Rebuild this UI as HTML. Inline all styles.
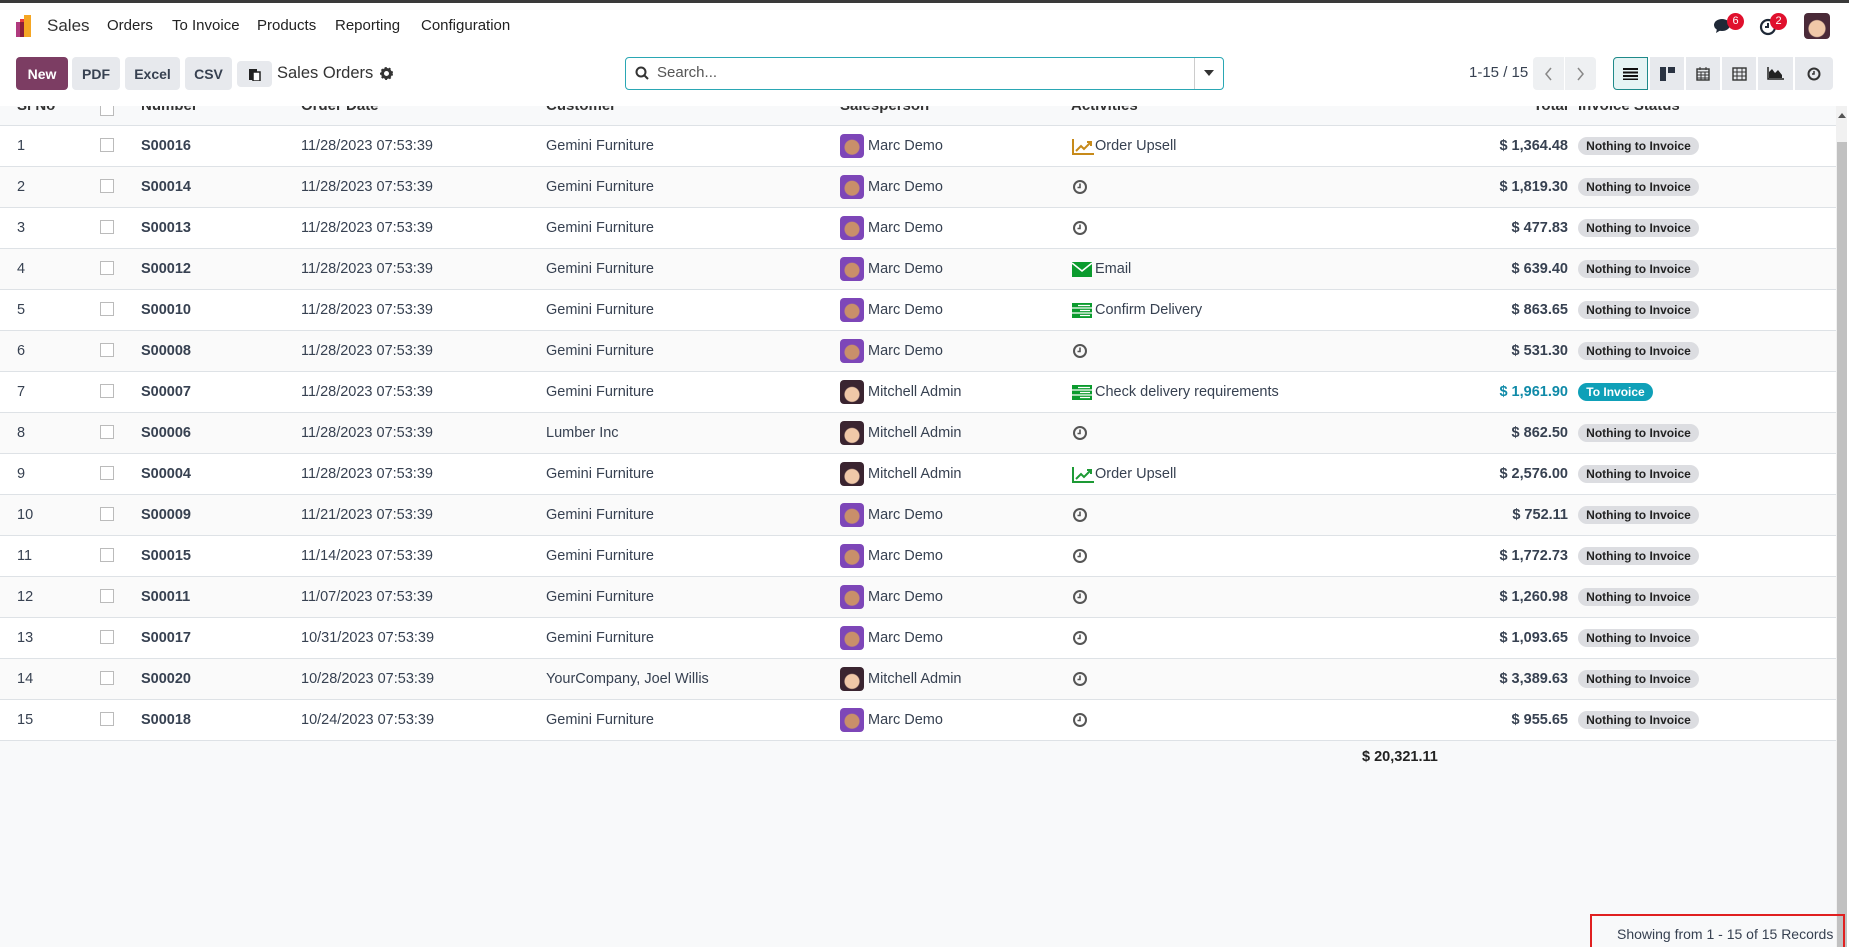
<!DOCTYPE html>
<html><head><meta charset="utf-8"><style>
*{box-sizing:border-box;margin:0;padding:0}
body{width:1849px;height:947px;overflow:hidden;background:#f8f9fa;font-family:"Liberation Sans",sans-serif;color:#374151;font-size:14.5px;position:relative}
.top{position:absolute;left:0;top:0;width:1849px;height:3px;background:#3a3a3a}
.nav{position:absolute;left:0;top:3px;width:1849px;height:47px;background:#fff}
.ab{position:absolute;white-space:nowrap}
.ctl{position:absolute;left:0;top:50px;width:1849px;height:56px;background:#fff}
.btn{position:absolute;top:57px;height:33px;border-radius:4px;background:#e7e9ed;font-weight:bold;font-size:14px;color:#374151;display:flex;align-items:center;justify-content:center}
.hdr{position:absolute;left:0;top:106px;width:1836px;height:20px;background:#f8f9fa;border-bottom:1px solid #dee2e6;overflow:hidden}
.hdr span{position:absolute;top:-9px;font-weight:bold;font-size:15px;color:#333;white-space:nowrap}
.row{position:absolute;left:0;width:1836px;height:41px;border-bottom:1px solid #dee2e6;background:#fff}
.row.s{background:#fafafa}
.row span,.row div{position:absolute;white-space:nowrap}
.cb{width:14px;height:14px;border:1px solid #bbb;background:#fff;top:12px;left:100px}
.t{top:12px;font-size:14.5px;color:#374151}
.b{font-weight:bold}
.av{left:840px;top:8px;width:24px;height:24px;border-radius:4px}
.m{background:radial-gradient(circle at 50% 55%,#c98f6a 0 7px,#7d46b8 8px)}
.a{background:radial-gradient(circle at 50% 60%,#f0c8a8 0 7px,#3a2430 8px)}
.bd{left:1578px;top:11px;height:18px;border-radius:9px;background:#dcdde1;font-weight:bold;font-size:12px;color:#222;line-height:18px;width:121px;text-align:center}
.ti{background:#0fa0b8;color:#fff;width:75px}
.amt{right:268px;top:12px;font-weight:bold}
.vs{position:absolute;top:57px;height:33px;background:#e7e9ed;display:flex;align-items:center;justify-content:center}
.nv{position:absolute;top:14px;font-size:15px;color:#222;white-space:nowrap}
</style></head><body>
<div class="top"></div>
<div class="nav">
 <svg class="ab" style="left:16px;top:12px" width="19" height="22"><rect x="0" y="7" width="7" height="15" fill="#b03a7e"/><rect x="4" y="4" width="7" height="18" fill="#e83c3c"/><rect x="8" y="0" width="7" height="22" fill="#f5a623"/><rect x="4" y="7" width="4" height="15" fill="#8c1f3a"/></svg>
 <span class="nv" style="left:47px;top:13px;font-size:17px;color:#333">Sales</span>
 <span class="nv" style="left:107px">Orders</span>
 <span class="nv" style="left:172px">To Invoice</span>
 <span class="nv" style="left:257px">Products</span>
 <span class="nv" style="left:335px">Reporting</span>
 <span class="nv" style="left:421px">Configuration</span>
</div>
<svg class="ab" style="left:1714px;top:18px" width="18" height="16"><ellipse cx="8" cy="7" rx="8" ry="6" fill="#1f2937"/><path d="M3 11 L2 15 L7 12Z" fill="#1f2937"/></svg>
<div class="ab" style="left:1727px;top:13px;width:17px;height:17px;border-radius:50%;background:#e0102d;color:#fff;font-size:11px;text-align:center;line-height:17px">6</div>
<svg class="ab" style="left:1759px;top:18px" width="18" height="18"><circle cx="9" cy="9" r="7" fill="none" stroke="#1f2937" stroke-width="2.2"/><path d="M9 5V9H6" fill="none" stroke="#1f2937" stroke-width="2"/></svg>
<div class="ab" style="left:1770px;top:13px;width:17px;height:17px;border-radius:50%;background:#e0102d;color:#fff;font-size:11px;text-align:center;line-height:17px">2</div>
<div class="ab" style="left:1804px;top:13px;width:26px;height:26px;border-radius:4px;background:radial-gradient(circle at 50% 60%,#f0c8a8 0 8px,#4a2a38 9px)"></div>

<div class="ctl"></div>
<div class="btn" style="left:16px;width:52px;background:#7c3d63;color:#fff">New</div>
<div class="btn" style="left:72px;width:48px">PDF</div>
<div class="btn" style="left:125px;width:55px">Excel</div>
<div class="btn" style="left:185px;width:47px">CSV</div>
<div class="btn" style="left:237px;width:35px;top:61px;height:26px"><svg width="12" height="14"><rect x="0" y="2" width="8" height="11" fill="#222"/><rect x="4" y="5" width="7" height="9" fill="#fff" stroke="#222" stroke-width="1.5"/></svg></div>
<span class="ab" style="left:277px;top:64px;font-size:16.5px;color:#333">Sales Orders</span>
<svg class="ab" style="left:380px;top:67px" width="13" height="13"><circle cx="6.5" cy="6.5" r="4" fill="none" stroke="#333" stroke-width="3"/><circle cx="6.5" cy="6.5" r="5.5" fill="none" stroke="#333" stroke-width="2" stroke-dasharray="2 2"/></svg>
<div class="ab" style="left:625px;top:57px;width:599px;height:33px;border:1px solid #2aa7b4;border-radius:4px;background:#fff"></div>
<svg class="ab" style="left:635px;top:66px" width="15" height="15"><circle cx="6" cy="6" r="4.5" fill="none" stroke="#333" stroke-width="2"/><path d="M9.5 9.5L13 13" stroke="#333" stroke-width="2"/></svg>
<span class="ab" style="left:657px;top:64px;font-size:15px;color:#555">Search...</span>
<div class="ab" style="left:1194px;top:58px;width:1px;height:31px;background:#ccc"></div>
<svg class="ab" style="left:1204px;top:70px" width="10" height="6"><path d="M0 0H10L5 6Z" fill="#333"/></svg>
<span class="ab" style="left:1469px;top:64px;font-size:15px;color:#374151">1-15 / 15</span>
<div class="vs" style="left:1533px;width:31px;border-radius:4px 0 0 4px;background:#eef0f2"><svg width="9" height="14"><path d="M7 1L2 7L7 13" fill="none" stroke="#888" stroke-width="1.5"/></svg></div>
<div class="vs" style="left:1565px;width:31px;border-radius:0 4px 4px 0;background:#eef0f2"><svg width="9" height="14"><path d="M2 1L7 7L2 13" fill="none" stroke="#888" stroke-width="1.5"/></svg></div>
<div class="vs" style="left:1613px;width:35px;background:#e6f4f4;border:1px solid #1f8a8a;border-radius:4px 0 0 4px"><svg width="15" height="12"><path d="M0 1H15M0 4.5H15M0 8H15M0 11.5H15" stroke="#111" stroke-width="2"/></svg></div>
<div class="vs" style="left:1650px;width:34px"><svg width="15" height="14"><rect x="0" y="0" width="6" height="14" fill="#2a3342"/><rect x="8" y="0" width="7" height="6" fill="#2a3342"/></svg></div>
<div class="vs" style="left:1686px;width:34px"><svg width="14" height="15"><rect x="1" y="3" width="12" height="11" fill="none" stroke="#333" stroke-width="1.4"/><path d="M1 6H13M4 1V4M10 1V4M1 9H13M1 12H13M5 6V14M9 6V14" stroke="#333"/></svg></div>
<div class="vs" style="left:1722px;width:34px"><svg width="15" height="14"><rect x="1" y="1" width="13" height="12" fill="none" stroke="#333" stroke-width="1.4"/><path d="M1 5H14M1 9H14M5 1V13M10 1V13" stroke="#333"/></svg></div>
<div class="vs" style="left:1758px;width:35px"><svg width="17" height="13"><path d="M1 0V12H17" fill="none" stroke="#222" stroke-width="1.5"/><path d="M2 11V5L5 2L8 6L11 3L15 8V11Z" fill="#222"/></svg></div>
<div class="vs" style="left:1795px;width:38px;border-radius:0 4px 4px 0"><svg width="14" height="14"><circle cx="7" cy="7" r="5.5" fill="none" stroke="#333" stroke-width="2"/><path d="M7 4V7H5" fill="none" stroke="#333" stroke-width="1.5"/></svg></div>

<div class="hdr">
 <span style="left:17px">Sl No</span>
 <span style="left:100px;top:-4px;width:14px;height:14px;border:1px solid #bbb;background:#fff"></span>
 <span style="left:141px">Number</span>
 <span style="left:301px">Order Date</span>
 <span style="left:546px">Customer</span>
 <span style="left:840px">Salesperson</span>
 <span style="left:1071px">Activities</span>
 <span style="right:268px">Total</span>
 <span style="left:1578px">Invoice Status</span>
 <span style="left:1810px;top:-3px;width:14px;height:3px;background:#222"></span>
</div>

<div id="rows"></div>
<div class="ab" style="left:1362px;top:749px;font-weight:bold;font-size:14.5px;color:#222">$ 20,321.11</div>

<div class="ab" style="left:1836px;top:106px;width:11px;height:841px;background:#f1f1f1"></div>
<svg class="ab" style="left:1838px;top:113px" width="8" height="5"><path d="M0 5L4 0L8 5Z" fill="#555"/></svg>
<div class="ab" style="left:1837px;top:142px;width:10px;height:805px;background:#c1c1c1"></div>
<div class="ab" style="left:1847px;top:106px;width:2px;height:841px;background:#fff"></div>

<div class="ab" style="left:1590px;top:914px;width:255px;height:33px;border:2px solid #e02020;border-bottom:none"></div>
<span class="ab" style="left:1617px;top:926px;font-size:14px;color:#374151">Showing from 1 - 15 of 15 Records</span>

<script>
const d=[
[1,"S00016","11/28/2023","Gemini Furniture","m","up","Order Upsell","1,364.48",0],
[2,"S00014","11/28/2023","Gemini Furniture","m","ck","","1,819.30",0],
[3,"S00013","11/28/2023","Gemini Furniture","m","ck","","477.83",0],
[4,"S00012","11/28/2023","Gemini Furniture","m","em","Email","639.40",0],
[5,"S00010","11/28/2023","Gemini Furniture","m","tr","Confirm Delivery","863.65",0],
[6,"S00008","11/28/2023","Gemini Furniture","m","ck","","531.30",0],
[7,"S00007","11/28/2023","Gemini Furniture","a","tr","Check delivery requirements","1,961.90",1],
[8,"S00006","11/28/2023","Lumber Inc","a","ck","","862.50",0],
[9,"S00004","11/28/2023","Gemini Furniture","a","up2","Order Upsell","2,576.00",0],
[10,"S00009","11/21/2023","Gemini Furniture","m","ck","","752.11",0],
[11,"S00015","11/14/2023","Gemini Furniture","m","ck","","1,772.73",0],
[12,"S00011","11/07/2023","Gemini Furniture","m","ck","","1,260.98",0],
[13,"S00017","10/31/2023","Gemini Furniture","m","ck","","1,093.65",0],
[14,"S00020","10/28/2023","YourCompany, Joel Willis","a","ck","","3,389.63",0],
[15,"S00018","10/24/2023","Gemini Furniture","m","ck","","955.65",0]];
const ic={
up:'<svg width="22" height="16"><path d="M1 0V15H22" fill="none" stroke="#c78a1a" stroke-width="2"/><path d="M4 12L9 7L12 10L19 3M15 3H19V7" fill="none" stroke="#c78a1a" stroke-width="2"/></svg>',
up2:'<svg width="22" height="16"><path d="M1 0V15H22" fill="none" stroke="#1d9a35" stroke-width="2"/><path d="M4 12L9 7L12 10L19 3M15 3H19V7" fill="none" stroke="#1d9a35" stroke-width="2"/></svg>',
ck:'<svg width="16" height="16"><circle cx="8" cy="8" r="6" fill="none" stroke="#555" stroke-width="2"/><path d="M8 4.5V8.5H5.5" fill="none" stroke="#555" stroke-width="1.6"/></svg>',
em:'<svg width="20" height="15"><rect width="20" height="15" fill="#0b9b2e"/><path d="M0 1L10 9L20 1" fill="none" stroke="#fff" stroke-width="1.6"/></svg>',
tr:'<svg width="20" height="15"><rect width="20" height="15" fill="#0b9b2e"/><path d="M0 5H20M0 10H20M6 2.5H18M8 7.5H18M8 12.5H18" stroke="#fff" stroke-width="1.2"/></svg>'};
let h="";
d.forEach((r,i)=>{const y=126+i*41;
h+=`<div class="row${i%2?' s':''}" style="top:${y}px">
<span class="t" style="left:17px">${r[0]}</span><div class="cb"></div>
<span class="t b" style="left:141px">${r[1]}</span>
<span class="t" style="left:301px">${r[2]} 07:53:39</span>
<span class="t" style="left:546px">${r[3]}</span>
<div class="av ${r[4]}"></div><span class="t" style="left:868px">${r[4]=='m'?'Marc Demo':'Mitchell Admin'}</span>
<span style="left:1072px;top:${r[5]=='ck'?12:13}px">${ic[r[5]]}</span>
<span class="t" style="left:1095px">${r[6]}</span>
<span class="amt" style="${r[8]?'color:#0f8aa8':''}">$ ${r[7]}</span>
<span class="bd${r[8]?' ti':''}">${r[8]?'To Invoice':'Nothing to Invoice'}</span></div>`;});
document.getElementById('rows').innerHTML=h;
</script>
</body></html>
